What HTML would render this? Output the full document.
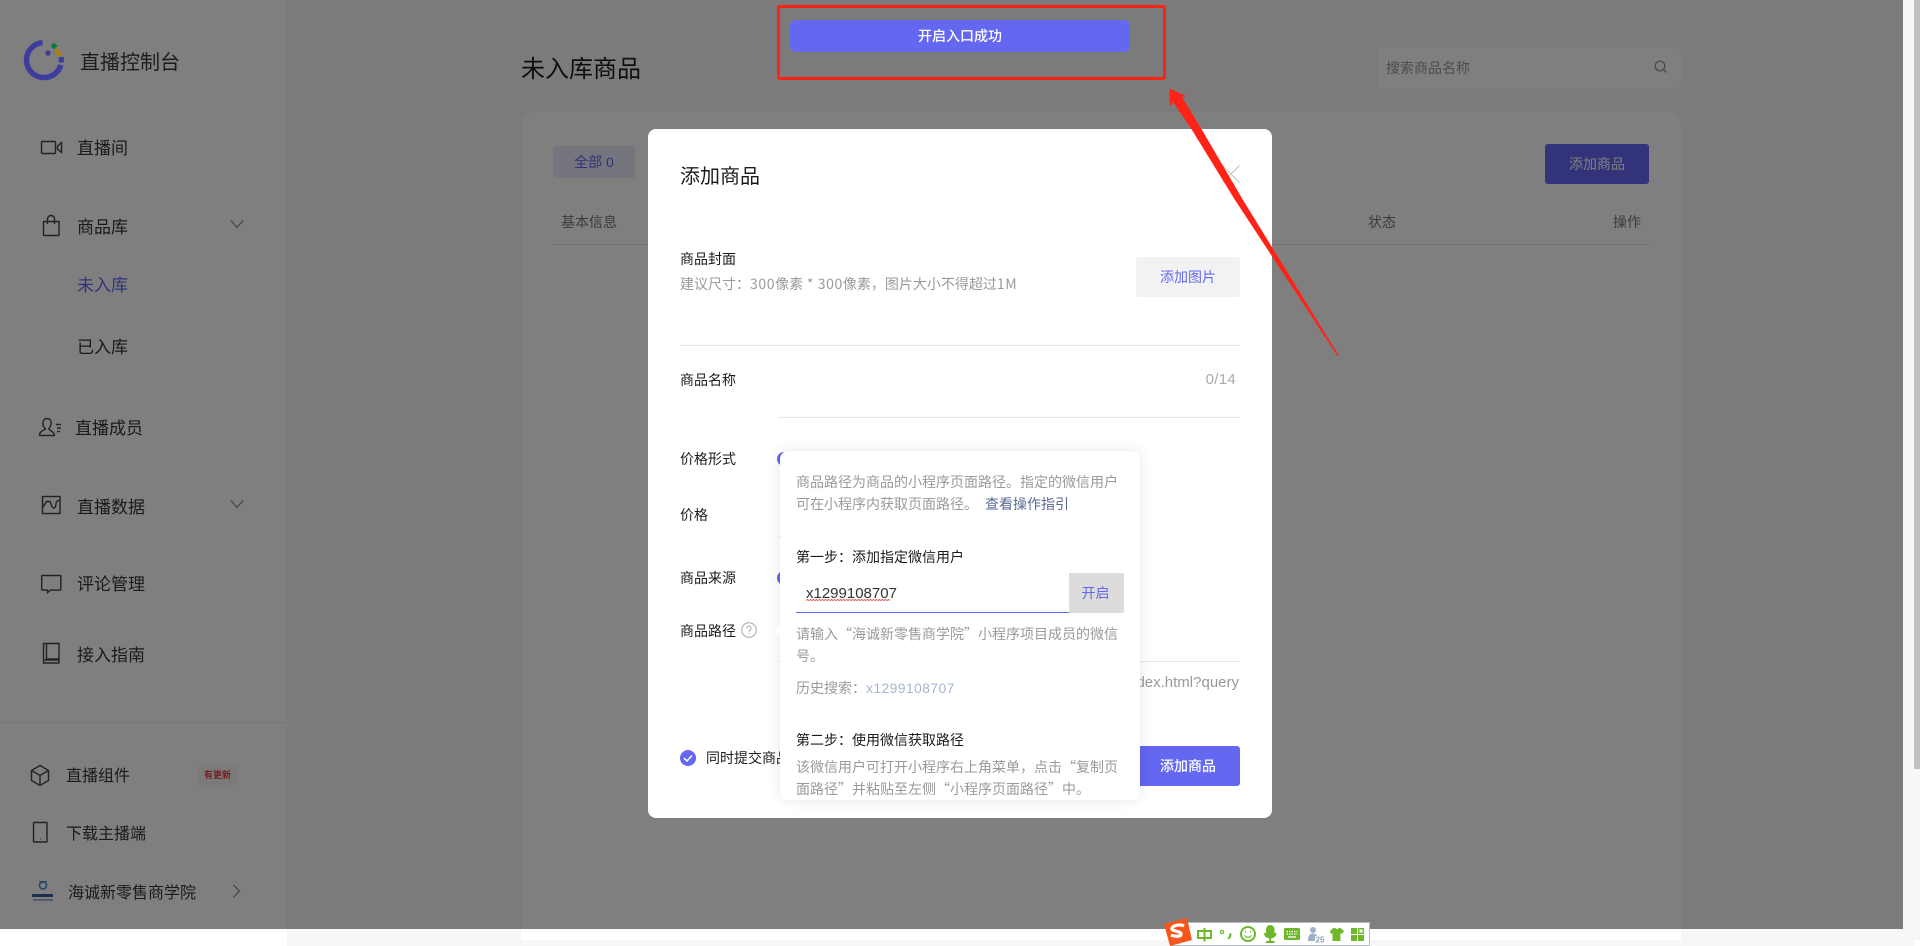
<!DOCTYPE html>
<html lang="zh-CN">
<head>
<meta charset="utf-8">
<title>直播控制台</title>
<style>
html,body{margin:0;padding:0;width:1920px;height:946px;overflow:hidden;background:#f6f7f9}
body{position:relative;font-family:"Liberation Sans","Noto Sans CJK SC",sans-serif;font-size:14px;color:#222}
.t{position:absolute;line-height:20px;height:20px;white-space:nowrap}
.z{font-family:"Noto Sans CJK SC","Liberation Sans",sans-serif}
.a{position:absolute}
svg{position:absolute;overflow:visible}
.m{font-size:17px;color:#353535}
.m2{font-size:16px;color:#353535}
.s{color:#9a9a9a}
.d{color:#1c1c1c}
.l{letter-spacing:.6px}
</style>
</head>
<body>
<!-- page base -->
<div class="a" style="left:0;top:0;width:287px;height:946px;background:#fff"></div>
<div class="a" style="left:521px;top:112px;width:1160px;height:828px;background:#fff;border-radius:12px 12px 0 0"></div>

<div class="t z" style="left:80px;top:51px;font-size:20px;color:#3a3a3a">直播控制台</div>

<svg style="left:0;top:0" width="287" height="946" fill="none" stroke="#444" stroke-width="1.4">
<!-- video -->
<rect x="41.5" y="141.5" width="14" height="12" rx="1"/><path d="M61.5 142.5v10l-4-3.5v-3z"/>
<!-- bag -->
<path d="M43.5 221.5h15.5v13a1 1 0 0 1-1 1h-13.500a1 1 0 0 1-1-1zM47.500 224v-5a3.500 3.500 0 0 1 7 0v5"/>
<path d="M231 220.500l6 7 6-7" stroke="#888" stroke-width="1.200"/>
<!-- person -->
<path d="M39.500 435.500h15.500M39.500 435.500c0-4 3-4.500 6-6.500-2.500-2.500-3-5-2.500-7 .7-2.500 2.500-3.500 4.200-3.500 2.300 0 4 1.700 4 4 0 2.500-1 4.500-2.500 6.500 1.500 1.500 3.500 2.500 5 4 .4.500.5 1.500.5 2.500M56 424.500h5M57 428h4M57 431.500h3"/>
<!-- data -->
<rect x="42.500" y="496.500" width="17.500" height="17"/><path d="M43 507l3.500-5.500 3.500 0 2 5c1 2 3 2 3.500 0l1-5 3-1.500"/>
<path d="M231 500.500l6 7 6-7" stroke="#888" stroke-width="1.200"/>
<!-- comment -->
<path d="M42.500 575.500h17.500a.8.8 0 0 1 .8.8v13a.8.8 0 0 1-.8.8h-9.500l-3 2.500v-2.500h-5a.8.8 0 0 1-.8-.8v-13a.8.8 0 0 1 .8-.8z"/>
<!-- book -->
<path d="M43.500 643.500h15.500v19.500h-15.500zM46.500 643.500v15.500h12.500M43.500 660h15.500"/>
<!-- box -->
<path d="M40 765.500l8.500 5v10l-8.500 5-8.500-5v-10zM31.500 770.500l8.500 5 8.500-5M40 775.500v10"/>
<!-- phone -->
<rect x="33.500" y="822.500" width="13.500" height="19.500" rx=".8"/><path d="M40 839h.6" stroke-width="1.500"/>
<path d="M233.500 885l6 6-6 6.500" stroke="#888" stroke-width="1.200"/>
</svg>

<div class="t z m" style="left:77px;top:137px">直播间</div>
<div class="t z m" style="left:77px;top:216px">商品库</div>
<div class="t z m" style="left:77px;top:274px;color:#6467f0">未入库</div>
<div class="t z m" style="left:77px;top:336px">已入库</div>
<div class="t z m" style="left:75px;top:417px">直播成员</div>
<div class="t z m" style="left:77px;top:496px">直播数据</div>
<div class="t z m" style="left:77px;top:573px">评论管理</div>
<div class="t z m" style="left:77px;top:644px">接入指南</div>
<div class="a" style="left:0;top:722px;width:287px;height:1px;background:#eee"></div>
<div class="t z m2" style="left:66px;top:764px">直播组件</div>
<div class="a" style="left:199px;top:765px;width:39px;height:20px;background:#f7f3f3"></div>
<div class="t z" style="left:204px;top:765px;font-size:9px;font-weight:700;color:#e23a3a">有更新</div>
<div class="t z m2" style="left:66px;top:822px">下载主播端</div>
<div class="t z m2" style="left:68px;top:881px">海诚新零售商学院</div>
<svg style="left:32px;top:881px" width="22" height="22" fill="none">
<circle cx="11" cy="4.500" r="3.500" stroke="#4a90d0" stroke-width="1.600"/><path d="M7 .5l8 0" stroke="#4a90d0" stroke-width="1"/>
<rect x="0" y="13" width="21" height="3" fill="#3a5f9a"/><rect x="1" y="18" width="20" height="2" fill="#a5b6d2"/>
</svg>

<!-- main -->
<div class="t z" style="left:521px;top:57px;font-size:24px;color:#1c1c1c">未入库商品</div>
<div class="a" style="left:1377px;top:48px;width:304px;height:40px;background:#fff;border-radius:5px"></div>
<div class="t z" style="left:1386px;top:58px;color:#999">搜索商品名称</div>
<svg style="left:1654px;top:60px" width="14" height="14" fill="none" stroke="#8c8c8c" stroke-width="1.200"><circle cx="6" cy="6" r="4.800"/><path d="M9.500 9.500l3 3"/></svg>
<div class="a" style="left:553px;top:146px;width:82px;height:32px;background:#e9ebfb;border-radius:3px"></div>
<div class="t" style="left:553px;top:152px;width:82px;text-align:center;color:#6467f0">全部 0</div>
<div class="t z" style="left:561px;top:212px;color:#777">基本信息</div>
<div class="t z" style="left:1368px;top:212px;color:#777">状态</div>
<div class="t z" style="left:1613px;top:212px;color:#777">操作</div>
<div class="a" style="left:553px;top:244px;width:1096px;height:1px;background:#e0e0e0"></div>
<div class="a" style="left:1545px;top:144px;width:104px;height:40px;background:#6467f0;border-radius:3px"></div>
<div class="t z" style="left:1545px;top:154px;width:104px;text-align:center;color:#fff">添加商品</div>

<!-- overlay -->
<div class="a" style="left:0;top:0;width:1903px;height:929px;background:rgba(0,0,0,.5)"></div>
<div class="a" style="left:1914px;top:0;width:6px;height:769px;background:#c1c1c1"></div>
<div class="a" style="left:1914px;top:940px;width:6px;height:6px;background:#fff"></div>

<!-- logo above overlay -->
<svg style="left:24px;top:40px" width="40" height="40" fill="none">
<path d="M18.500 2.600A17.500 17.500 0 1 0 36.800 25" stroke="#3c3d9c" stroke-width="5.500"/>
<path d="M37.300 17v5.500" stroke="#3c3d9c" stroke-width="5"/>
<path d="M30 2.500l3.500 3.500-3.500 3.500-3.500-3.500z" fill="#0b7c46"/>
<path d="M32.500 7.500l3.500 3.500 2.500 4.500-5 1-2.500-4z" fill="#a87f18"/>
<circle cx="24" cy="13" r="2.700" fill="#3c3d9c"/>
</svg>

<!-- toast -->
<div class="a" style="left:790px;top:20px;width:340px;height:32px;background:#6467f0;border-radius:6px"></div>
<div class="t z" style="left:790px;top:26px;width:340px;text-align:center;color:#fff;font-weight:500">开启入口成功</div>

<!-- modal -->
<div class="a" style="left:648px;top:129px;width:624px;height:689px;background:#fff;border-radius:8px"></div>
<div class="t z" style="left:680px;top:165px;font-size:20px;color:#1c1c1c">添加商品</div>
<svg style="left:1222px;top:165px" width="18" height="18" fill="none" stroke="#c8c8c8" stroke-width="1.200"><path d="M.5.500l17 17M17.500.500l-17 17"/></svg>
<div class="t z d" style="left:680px;top:249px">商品封面</div>
<div class="t z s" style="left:680px;top:274px">建议尺寸：<span class="l">300</span>像素<span class="l"> * 300</span>像素，图片大小不得超过<span class="l">1M</span></div>
<div class="a" style="left:1136px;top:257px;width:104px;height:40px;background:#f2f2f2;border-radius:3px"></div>
<div class="t z" style="left:1136px;top:267px;width:104px;text-align:center;color:#6467f0">添加图片</div>
<div class="a" style="left:680px;top:345px;width:560px;height:1px;background:#e5e5e5"></div>
<div class="t z d" style="left:680px;top:370px">商品名称</div>
<div class="t" style="right:684px;top:370px;color:#aaa;font-size:15px;letter-spacing:.3px">0/14</div>
<div class="a" style="left:778px;top:417px;width:462px;height:1px;background:#e5e5e5"></div>
<div class="t z d" style="left:680px;top:449px">价格形式</div>
<div class="a" style="left:777px;top:452px;width:14px;height:14px;border-radius:50%;background:#6467f0"></div>
<div class="t z d" style="left:680px;top:505px">价格</div>
<div class="a" style="left:778px;top:536px;width:10px;height:1px;background:#e5e5e5"></div>
<div class="t z d" style="left:680px;top:568px">商品来源</div>
<div class="a" style="left:777px;top:571px;width:14px;height:14px;border-radius:50%;background:#6467f0"></div>
<div class="t z d" style="left:680px;top:621px">商品路径</div>
<svg style="left:741px;top:622px" width="16" height="16" fill="none" stroke="#a8a8a8"><circle cx="8" cy="8" r="7.300"/><path d="M5.800 6.200a2.200 2.200 0 1 1 3.500 1.800c-.8.600-1.300 1-1.300 2.200M8 11.500v1"/></svg>
<div class="a" style="left:778px;top:661px;width:462px;height:1px;background:#e5e5e5"></div>
<div class="t" style="right:681px;top:673px;color:#999;font-size:15px">index.html?query</div>
<div class="a" style="left:680px;top:750px;width:16px;height:16px;border-radius:50%;background:#6467f0"></div>
<svg style="left:680px;top:750px" width="16" height="16" fill="none" stroke="#fff" stroke-width="1.600"><path d="M4 8.200l3 2.800 5-5.500"/></svg>
<div class="t z d" style="left:706px;top:748px">同时提交商品审核</div>
<div class="a" style="left:1136px;top:746px;width:104px;height:40px;background:#6467f0;border-radius:3px"></div>
<div class="t z" style="left:1136px;top:756px;width:104px;text-align:center;color:#fff;font-weight:500">添加商品</div>

<!-- popover -->
<div class="a" style="left:780px;top:451px;width:360px;height:349px;background:#fff;border-radius:8px;box-shadow:0 0 14px rgba(0,0,0,.1)"></div>
<div class="a" style="left:776px;top:626px;width:9px;height:9px;background:#fff;transform:rotate(45deg)"></div>
<div class="a" style="left:780px;top:451px;width:360px;height:349px;overflow:hidden;border-radius:8px 8px 8px 0">
<div class="t z s" style="left:16px;top:21px">商品路径为商品的小程序页面路径。指定的微信用户</div>
<div class="t z s" style="left:16px;top:43px">可在小程序内获取页面路径。</div>
<div class="t z" style="left:205px;top:43px;color:#576b95">查看操作指引</div>
<div class="t z d" style="left:16px;top:96px">第一步：添加指定微信用户</div>
<div class="a" style="left:16px;top:161px;width:273px;height:1px;background:#6467f0"></div>
<div class="t" style="left:26px;top:133px;font-size:15px;color:#333">x1299108707</div>
<svg style="left:26px;top:148px" width="90" height="3" fill="none" stroke="#e04040" stroke-width=".8"><path d="M0 1.500l1.500-1 1.500 1 1.500-1 1.500 1 1.500-1 1.500 1 1.500-1 1.500 1 1.500-1 1.500 1 1.500-1 1.500 1 1.500-1 1.500 1 1.500-1 1.500 1 1.500-1 1.500 1 1.500-1 1.500 1 1.500-1 1.500 1 1.500-1 1.500 1 1.500-1 1.500 1 1.500-1 1.500 1 1.500-1 1.500 1 1.500-1 1.500 1 1.500-1 1.500 1 1.500-1 1.500 1 1.500-1 1.500 1 1.500-1 1.500 1 1.500-1 1.500 1 1.500-1 1.500 1 1.500-1 1.500 1 1.500-1 1.500 1 1.500-1 1.500 1 1.500-1 1.500 1 1.500-1 1.500 1 1.500-1 1.500 1"/></svg>
<div class="a" style="left:289px;top:122px;width:55px;height:40px;background:#dcdcdc;border-radius:0 2px 2px 0"></div>
<div class="t z" style="left:288px;top:132px;width:55px;text-align:center;color:#6467f0">开启</div>
<div class="t z s" style="left:16px;top:173px">请输入“海诚新零售商学院”小程序项目成员的微信</div>
<div class="t z s" style="left:16px;top:195px">号。</div>
<div class="t z s" style="left:16px;top:227px">历史搜索：</div>
<div class="t" style="left:86px;top:227px;color:#a7b5d0;letter-spacing:.35px">x1299108707</div>
<div class="t z d" style="left:16px;top:279px">第二步：使用微信获取路径</div>
<div class="t z s" style="left:16px;top:306px">该微信用户可打开小程序右上角菜单，点击“复制页</div>
<div class="t z s" style="left:16px;top:328px">面路径”并粘贴至左侧“小程序页面路径”中。</div>
</div>

<!-- annotation -->
<svg style="left:0;top:0" width="1920" height="946" fill="none">
<rect x="778.500" y="6.500" width="386" height="72" rx="1" stroke="#ff2216" stroke-width="3"/>
<path d="M1169.300 88.500L1186 96L1182 97L1202 130L1243 200L1339 356L1337.500 356L1235 200L1192 130L1173 102L1170 106Z" fill="#ff2216"/>
</svg>

<!-- IME bar -->
<div class="a" style="left:1170px;top:922px;width:198px;height:22px;background:#fff;border:1px solid #b9bcc4"></div>
<svg style="left:1163px;top:918px" width="30" height="28"><path d="M1 6L24 0L29 22L7 28Z" fill="#f4561c"/><path d="M21 8c-3-2-11-1-12 2.500-.8 3 10 2.500 9 6-.7 2.500-7 2-10 .5" fill="none" stroke="#fff" stroke-width="3.200"/></svg>
<svg style="left:1190px;top:920px" width="180" height="26" fill="none" stroke="#6fb72a" stroke-width="2">
<rect x="8" y="11" width="13" height="7"/><path d="M14.500 8v13.500"/>
<circle cx="32" cy="12" r="1.600" stroke-width="1.300"/><path d="M40 13.500c1 2 0 4-2 5" stroke-width="2.200"/>
<circle cx="58" cy="14" r="7"/><path d="M54.500 15.500c2 2.500 5 2.500 7 0M55.500 11v1.500M60.500 11v1.500" stroke-width="1.200"/>
<rect x="77" y="6" width="6.500" height="11" rx="3.200" fill="#6fb72a"/><path d="M75 13c0 6 10.500 6 10.500 0M80.200 18v3M76 22h8.500"/>
<rect x="94" y="8" width="16" height="12" rx="1.500" fill="#6fb72a" stroke="none"/><path d="M96.500 11.500h11M96.500 14h11" stroke="#fff" stroke-dasharray="1.500 1" stroke-width="1.300"/><path d="M98 17h8" stroke="#fff" stroke-width="1.300"/>
<circle cx="123" cy="10" r="3" fill="#9fb0c5" stroke="none"/><path d="M118 21c0-6 2-7.500 5-7.500s5 1.500 5 7.500z" fill="#9fb0c5" stroke="none"/>
<rect x="125" y="16" width="10" height="7" fill="#fff" stroke="none"/>
<text x="125.500" y="22.500" font-family="Liberation Sans" font-size="8" font-weight="700" fill="#8fa0b5" stroke="none">25</text>
<path d="M140 11l3.500-3h2c.5 1.500 2.500 1.500 3 0h2l3.500 3-1.800 3-1.700-1v8h-8v-8l-1.700 1z" fill="#6fb72a" stroke="none"/>
<path d="M161 8h6v6h-6zM161 15h6v6h-6zM168 15h6v6h-6z" fill="#6fb72a" stroke="none"/>
<rect x="168.700" y="8.700" width="4.600" height="4.600" stroke-width="1.400"/>
</svg>
</body>
</html>
